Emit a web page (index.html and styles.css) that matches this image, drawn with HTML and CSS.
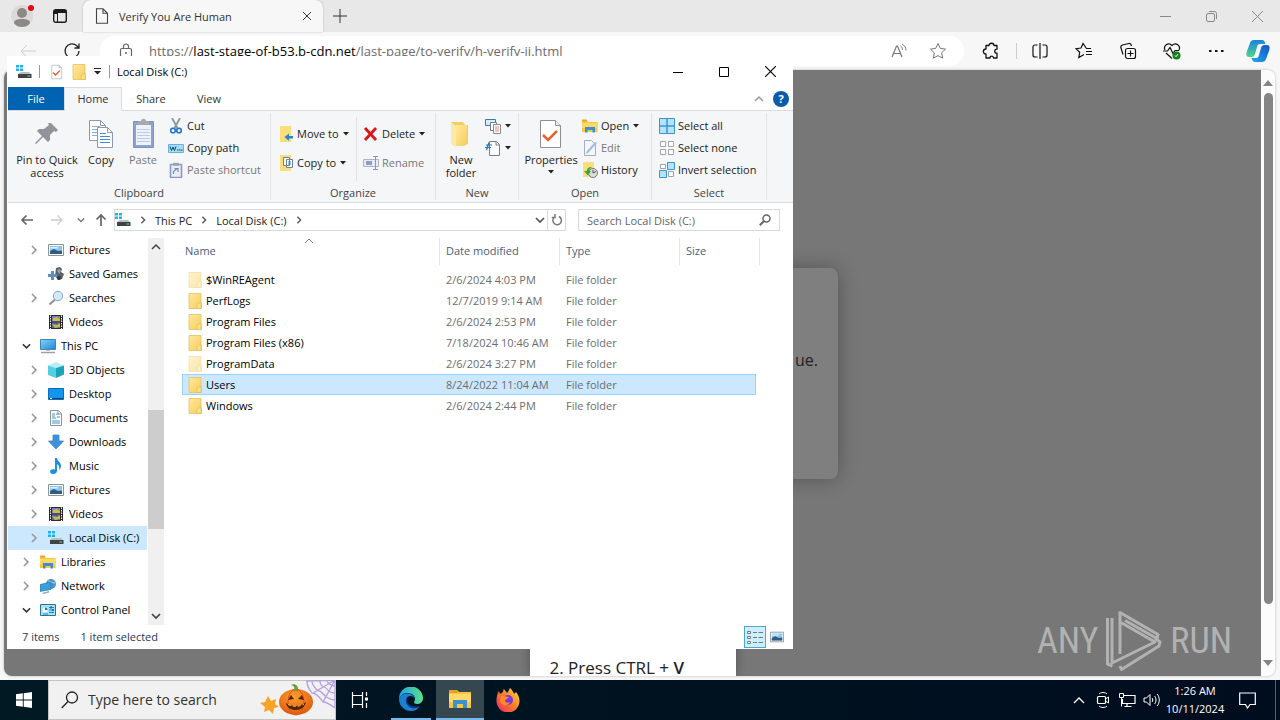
FILE: index.html
```html
<!DOCTYPE html>
<html lang="en">
  <head>
    <meta charset="UTF-8" />
    <meta name="viewport" content="width=device-width, initial-scale=1.0" />
    <title>Verify You Are Human</title>
    <link rel="stylesheet" href="styles.css">
  </head>
  <body>
    <!-- shared icons -->
    <svg class="sprite" aria-hidden="true">
      <defs>
        <linearGradient id="g-folder" x1="0" y1="0" x2="1" y2="1">
          <stop offset="0" stop-color="#ffe9a0" /><stop offset="1" stop-color="#f5cd58" />
        </linearGradient>
        <linearGradient id="g-sky" x1="0" y1="0" x2="1" y2="1">
          <stop offset="0" stop-color="#7fd4fb" /><stop offset="1" stop-color="#1b86d8" />
        </linearGradient>
        <linearGradient id="g-edge" x1="0" y1="0" x2="1" y2="0">
          <stop offset="0" stop-color="#1ea2e6" /><stop offset="1" stop-color="#5be08a" />
        </linearGradient>
        <linearGradient id="g-fox" x1="1" y1="0" x2="0" y2="1">
          <stop offset="0" stop-color="#ffe24a" /><stop offset="0.5" stop-color="#ff7a26" /><stop offset="1" stop-color="#f0246c" />
        </linearGradient>
        <linearGradient id="g-cop1" x1="0" y1="0" x2="0" y2="1">
          <stop offset="0" stop-color="#1683e0" /><stop offset="1" stop-color="#52d68a" />
        </linearGradient>
        <linearGradient id="g-cop2" x1="1" y1="0" x2="0" y2="1">
          <stop offset="0" stop-color="#1456c4" /><stop offset="1" stop-color="#22a7f2" />
        </linearGradient>
        <radialGradient id="g-pump" cx="0.45" cy="0.3" r="0.7">
          <stop offset="0" stop-color="#ff9d2e" /><stop offset="1" stop-color="#dc5a10" />
        </radialGradient>
      </defs>
      <symbol id="i-chevron" viewBox="0 0 10 10"><path d="M3 1l4 4-4 4" fill="none" stroke="currentColor" stroke-width="1.7" /></symbol>
      <symbol id="i-down" viewBox="0 0 10 10"><path d="M1 3l4 4 4-4" fill="none" stroke="currentColor" stroke-width="1.7" /></symbol>
      <symbol id="i-up" viewBox="0 0 10 10"><path d="M1 7l4-4 4 4" fill="none" stroke="currentColor" stroke-width="1.5" /></symbol>
      <symbol id="i-caret" viewBox="0 0 6 4"><path d="M0 0h6L3 3.500z" fill="#222" /></symbol>
      <symbol id="i-folder" viewBox="0 0 14 16">
        <path d="M1 .5h12v9l.5 1v5H1z" fill="url(#g-folder)" stroke="#e6c260" stroke-width=".8" />
        <path d="M9 15.500V11l4-2v6.500z" fill="#fbe08a" stroke="#e3b94b" stroke-width=".6" />
      </symbol>
      <symbol id="i-disk" viewBox="0 0 16 16">
        <path d="M0 1h3v2.500H0zM4 1h3v2.500H4zM0 4.500h3V7H0zM4 4.500h3V7H4z" fill="#1cb3ea" />
        <path d="M3 9l2-1h8l2 2H2z" fill="#b9bec2" /><path d="M2 10h13.500v4H2z" fill="#3d4347" /><path d="M11.500 11.500h2.500v1h-2.500z" fill="#66e37b" />
      </symbol>
      <symbol id="i-pictures" viewBox="0 0 16 16">
        <path d="M.5 2.500h15v11H.5z" fill="#fff" stroke="#8e959b" /><path d="M2 4h12v8H2z" fill="#8cc6f2" />
        <path d="M2 12V9l4-2 4 2 4-.5V12z" fill="#2e5f80" /><path d="M2 5h8v1.500H2z" fill="#d9effc" />
      </symbol>
      <symbol id="i-games" viewBox="0 0 16 16">
        <path d="M8 2l4-1 2 2-1 3 3 2-2 5-4 1-3-4z" fill="#59626a" /><path d="M9 4l3-1 1 2-2 3z" fill="#9aa4ac" />
        <path d="M3 5h3v3h3v3H6v3H3v-3H0V8h3z" fill="#5f8fb9" /><circle cx="11" cy="12" r="2" fill="#323a40" />
      </symbol>
      <symbol id="i-search-glass" viewBox="0 0 16 16">
        <path d="M7 9.500L1.500 14.500" stroke="#8b8fa0" stroke-width="2" /><circle cx="10" cy="6" r="4.700" fill="#cfeafb" stroke="#8aa3b8" />
      </symbol>
      <symbol id="i-videos" viewBox="0 0 16 16">
        <path d="M1 1h14v14H1z" fill="#2a2a2e" /><path d="M4 2h8v5.500H4z" fill="#7a7fb8" /><path d="M4 8.500h8V14H4z" fill="#5c64a8" />
        <path d="M5 4l4-1 3 2v2H5zM4 10l5 1 3-2v4l-5 1z" fill="#c9bb45" />
        <path d="M2.500 1.500V15M13.500 1.500V15" stroke="#fff" stroke-dasharray="1.500 1" />
      </symbol>
      <symbol id="i-pc" viewBox="0 0 16 16">
        <path d="M.5 1.500h15v10H.5z" fill="url(#g-sky)" stroke="#4b84ab" /><path d="M1 14.500h14" stroke="#98a1a8" stroke-width="1.500" /><path d="M6 12h4v1H6z" fill="#c4cacf" />
      </symbol>
      <symbol id="i-3d" viewBox="0 0 16 16">
        <path d="M0 3.500L8 0l8 3.500L8 6z" fill="#b7eef5" /><path d="M0 3.500L8 6v10L0 13z" fill="#54cfe0" /><path d="M16 3.500L8 6v10l8-3.500z" fill="#1aa4b8" />
      </symbol>
      <symbol id="i-desktop" viewBox="0 0 16 16">
        <path d="M.5 2.500h15v11H.5z" fill="#1495ee" stroke="#0b6fb8" /><path d="M1 12.500h14" stroke="#0d3f68" /><path d="M2 12.500h2" stroke="#fff" />
      </symbol>
      <symbol id="i-docs" viewBox="0 0 16 16">
        <path d="M2.500.5h8l3 3v12h-11z" fill="#fff" stroke="#8b949b" />
        <path d="M4 4h3M4 6h3M4 11h8M4 13h8M8 4h3M9 7h3M4 8h4" stroke="#3a95cf" /><path d="M10 .5v3.500h3.500" fill="none" stroke="#8b949b" />
      </symbol>
      <symbol id="i-download" viewBox="0 0 16 16"><path d="M5 1h6v6h4.500L8 15 .5 7H5z" fill="#3d92dd" stroke="#2f7cc0" stroke-width=".7" /></symbol>
      <symbol id="i-music" viewBox="0 0 16 16"><path d="M7 0h2c0 3 4 4 4 8 0 2-1 3-2 4 1-4-1-5-2-6v7c0 2-2 3-4 3s-3-1-3-2.500S4 11 7 11.500z" fill="#1c8fe0" /></symbol>
      <symbol id="i-library" viewBox="0 0 16 16">
        <path d="M0 2h5l1 2h9.500v10H0z" fill="#f7c846" /><path d="M0 1.500h5v2H0z" fill="#e3a92f" /><path d="M0 5h16v5H0z" fill="#ffd965" />
        <path d="M3 14.500V9h10v5.500h-2.500V12h-5v2.500z" fill="#3f8fd0" />
      </symbol>
      <symbol id="i-network" viewBox="0 0 16 16">
        <circle cx="11" cy="6" r="5" fill="#4c94c7" /><path d="M8 3c2 0 4 2 7 2" stroke="#b8dcf2" fill="none" />
        <path d="M0 6.500L11 4v7.500L0 13.500z" fill="#38a0dc" stroke="#256f9e" stroke-width=".6" /><path d="M2 15l7-2v1.500L3 16z" fill="#8fa3b0" />
      </symbol>
      <symbol id="i-control" viewBox="0 0 16 16">
        <path d="M.5 2.500h15v11H.5z" fill="#a6e1f8" stroke="#2c7396" /><circle cx="5" cy="8" r="2.500" fill="#fff" /><path d="M5 8V5.500A2.500 2.500 0 0 1 7.500 8z" fill="#1872b4" />
        <path d="M9 5.500h5M9 8h5M3 12h5M9 10.500h5" stroke="#247eb8" /><path d="M10 4.500h2v2h-2zM12 7h2v2h-2z" fill="#1872b4" />
      </symbol>
      <symbol id="i-check-doc" viewBox="0 0 26 32">
        <path d="M2.500 2.500h15l5 5v22h-20z" fill="#fff" stroke="#8f8f8f" /><path d="M17.500 2.500v5h5" fill="#eee" stroke="#8f8f8f" />
        <path d="M5 17l5 5 9-9" fill="none" stroke="#e2622b" stroke-width="2.500" />
      </symbol>
    </svg>

    <div class="desktop">
      <div class="browser">
        <header class="tab-strip">
          <button class="icon-btn profile" aria-label="Profile">
            <svg width="24" height="24" viewBox="0 0 24 24"><circle cx="12" cy="12" r="11" fill="#dcdad8" /><circle cx="12" cy="9" r="5" fill="#8b8886" /><path d="M4 19c0-3 3-4 8-4s8 1 8 4c-2 3-5 4-8 4s-6-1-8-4z" fill="#8b8886" /><circle cx="21" cy="4" r="3" fill="#e20a17" /></svg>
          </button>
          <button class="icon-btn" aria-label="Workspaces">
            <svg width="16" height="16" viewBox="0 0 16 16"><rect x="1.700" y="1.700" width="12.600" height="12.600" rx="2" fill="none" stroke="#1b1b1b" stroke-width="1.400" /><path d="M2 2h12v3H2zM2 2h3v4H2z" fill="#1b1b1b" /><path d="M5.500 5v9" stroke="#1b1b1b" /></svg>
          </button>
          <div class="browser-tab">
            <svg width="14" height="16" viewBox="0 0 14 16"><path d="M1.500.8h6.500l4.500 4.500v10h-11zM8 .8v4.500h4.500" fill="none" stroke="#444" stroke-width="1.100" /></svg>
            <span>Verify You Are Human</span>
            <button aria-label="Close tab"><svg width="10" height="10" viewBox="0 0 10 10"><path d="M1 1l8 8M9 1L1 9" stroke="#333" /></svg></button>
          </div>
          <button class="new-tab" aria-label="New tab"><svg width="14" height="14" viewBox="0 0 14 14"><path d="M7 0v14M0 7h14" stroke="#333" /></svg></button>
          <div class="window-buttons faded">
            <button aria-label="Minimize"><svg width="11" height="11" viewBox="0 0 11 11"><path d="M0 5.500h11" stroke="currentColor" /></svg></button>
            <button aria-label="Restore"><svg width="11" height="11" viewBox="0 0 11 11"><rect x=".5" y="2.500" width="8" height="8" rx="1.500" fill="none" stroke="currentColor" /><path d="M3 .5h5.500a2 2 0 0 1 2 2V8" fill="none" stroke="currentColor" /></svg></button>
            <button aria-label="Close"><svg width="11" height="11" viewBox="0 0 11 11"><path d="M0 0l11 11M11 0L0 11" stroke="currentColor" /></svg></button>
          </div>
        </header>

        <div class="toolbar">
          <button class="nav-btn" aria-label="Back"><svg width="16" height="14" viewBox="0 0 16 14"><path d="M16 7H1M7 1L1 7l6 6" fill="none" stroke="#cfcfcf" /></svg></button>
          <button class="nav-btn" aria-label="Refresh"><svg width="18" height="18" viewBox="0 0 18 18"><path d="M16 9a7 7 0 1 1-2-5l2 2M16 1.500V6h-4.500" fill="none" stroke="#222" stroke-width="1.300" /></svg></button>
          <div class="address">
            <svg width="14" height="16" viewBox="0 0 14 16"><rect x="1.500" y="5.500" width="11" height="9" rx="1.500" fill="none" stroke="#666" stroke-width="1.200" /><path d="M4.500 5.500V3.500a2.500 2.500 0 0 1 5 0v2" fill="none" stroke="#666" stroke-width="1.200" /><circle cx="7" cy="10" r="1" fill="#666" /></svg>
            <div class="url" role="textbox" aria-label="Address" contenteditable="true" spellcheck="false">https://<b>last-stage-of-b53.b-cdn.net</b>/last-page/to-verify/h-verify-ii.html</div>
            <button class="pill-btn" aria-label="Read aloud"><svg width="16" height="16" viewBox="0 0 16 16"><path d="M1 14L5.500 3h1L11 14M2.500 10.500h7" fill="none" stroke="#767676" stroke-width="1.200" /><path d="M9.500 3c1.500 1 2 2 2 4M11 1c2.500 1.500 4 3.500 4 6.500" fill="none" stroke="#767676" /></svg></button>
            <button class="pill-btn" aria-label="Add to favorites"><svg width="18" height="18" viewBox="0 0 18 18"><path d="M9 1.500l2.300 4.900 5.200.7-3.800 3.700.9 5.300L9 13.600l-4.600 2.500.9-5.300L1.500 7.100l5.200-.7z" fill="none" stroke="#777" /></svg></button>
          </div>
          <div class="toolbar-icons">
            <button aria-label="Extensions"><svg width="18" height="18" viewBox="0 0 18 18"><path d="M4 3.500h3c0-3 5-3 5 0h3v3.700c-3 0-3 4 0 4V16h-3.500c0-2.500-3.500-2.500-3.500 0H4v-4c-3.500 0-3.500-5 0-5z" fill="none" stroke="#111" stroke-width="1.300" stroke-linejoin="round" /></svg></button>
            <i class="divider"></i>
            <button aria-label="Split screen"><svg width="18" height="18" viewBox="0 0 18 18"><path d="M6.500 3H4a2 2 0 0 0-2 2v8a2 2 0 0 0 2 2h2.500M11.500 3H14a2 2 0 0 1 2 2v8a2 2 0 0 1-2 2h-2.500M9 1v16" fill="none" stroke="#111" stroke-width="1.200" /></svg></button>
            <button aria-label="Favorites"><svg width="18" height="18" viewBox="0 0 18 18"><path d="M16 6.500h-4.500L8 1.500 6 6l-5 .7 3.700 3.600-.9 5.200L9 12.500M11 9.500h6M11 12.500h6" fill="none" stroke="#111" stroke-width="1.200" /></svg></button>
            <button aria-label="Collections"><svg width="18" height="18" viewBox="0 0 18 18"><rect x="6.500" y="6.500" width="10" height="10" rx="2" fill="none" stroke="#111" stroke-width="1.200" /><path d="M11.500 8.500v6M8.500 11.500h6M4 12.500L2 6c-.5-1.500 0-2.500 1.500-3L10 1.500c1.500-.3 2 .5 2.500 2.500" fill="none" stroke="#111" stroke-width="1.200" /></svg></button>
            <button aria-label="Browser essentials"><svg width="18" height="18" viewBox="0 0 18 18"><path d="M2 8c-2-4 3-8.500 7-4.500 4-4 9 .5 7 4.500M3 11l6 5.500M0 9h4.500L7 5.500l3 6L12 8.500h4" fill="none" stroke="#111" stroke-width="1.200" /><circle cx="13.500" cy="13.500" r="4" fill="#16801c" /><path d="M12 13.500l1 1.200 2-2.500" fill="none" stroke="#fff" /></svg></button>
            <button aria-label="Settings and more"><svg width="16" height="16" viewBox="0 0 16 16"><path d="M1 7h2.500v2H1zM7 7h2.500v2H7zM13 7h2.500v2H13z" fill="#111" /></svg></button>
          </div>
          <button class="copilot" aria-label="Copilot">
            <svg width="24" height="24" viewBox="0 0 24 24"><path d="M8 1h8c2 0 3 2 3.500 4H14c-2 0-2.500 1-3 3l-2 7c-.6 2-1.500 3-3.500 3H3c-3 0-3-3-2-6L4 4c.6-2 2-3 4-3z" fill="url(#g-cop1)" /><path d="M16 23H9c-2 0-3-2-3.500-4H10c2 0 2.500-1 3-3l2-7c.6-2 1.500-3 3.500-3H21c3 0 3 3 2 6l-3 8c-.6 2-2 3-4 3z" fill="url(#g-cop2)" /></svg>
          </button>
        </div>

        <main class="viewport">
          <div class="page">
            <div class="card"><p>ue.</p></div>
            <div class="steps">2. Press CTRL + <b>V</b></div>
            <div class="watermark">
              <span>ANY</span>
              <svg width="56" height="62" viewBox="0 0 56 62"><path d="M6 8v45l43-21-35-20v32M1.500 8v46l5 2M14 12V2.500l38 22-1 4-32-18M14 56l1.500 3.500L53 36l1-4-5-4" fill="none" stroke="currentColor" stroke-width="3" stroke-linejoin="round" /></svg>
              <span>RUN</span>
            </div>
          </div>
          <div class="page-scroll">
            <svg width="10" height="6" viewBox="0 0 10 6"><path d="M0 6h10L5 0z" fill="#858585" /></svg>
            <i></i>
            <svg width="10" height="6" viewBox="0 0 10 6"><path d="M0 0h10L5 6z" fill="#858585" /></svg>
          </div>
        </main>
      </div>

      <section class="explorer">
        <header class="titlebar">
          <svg width="16" height="16"><use href="#i-disk" /></svg>
          <i class="bar"></i>
          <button aria-label="Properties"><svg width="14" height="16"><use href="#i-check-doc" /></svg></button>
          <button aria-label="New folder"><svg width="14" height="16"><use href="#i-folder" /></svg></button>
          <button class="customize" aria-label="Customize toolbar"><svg width="7" height="7" viewBox="0 0 7 7"><path d="M0 .5h7" stroke="#222" /><path d="M0 3h7L3.500 6.500z" fill="#222" /></svg></button>
          <i class="bar"></i>
          <span>Local Disk (C:)</span>
          <div class="window-buttons">
            <button aria-label="Minimize"><svg width="10" height="10" viewBox="0 0 10 10"><path d="M0 5.500h10" stroke="currentColor" /></svg></button>
            <button aria-label="Maximize"><svg width="10" height="10" viewBox="0 0 10 10"><path d="M.5.5h9v9h-9z" fill="none" stroke="currentColor" /></svg></button>
            <button aria-label="Close"><svg width="11" height="11" viewBox="0 0 11 11"><path d="M0 0l11 11M11 0L0 11" stroke="currentColor" stroke-width="1.100" /></svg></button>
          </div>
        </header>

        <nav class="ribbon-tabs">
          <button class="file">File</button>
          <button class="active">Home</button>
          <button>Share</button>
          <button>View</button>
          <svg class="collapse" width="10" height="10"><use href="#i-up" /></svg>
          <button class="help" aria-label="Help">?</button>
        </nav>

        <div class="ribbon">
          <div class="group">
            <div class="tools clipboard">
              <button class="big pin"><svg width="32" height="32" viewBox="0 0 32 32"><path d="M20 5l7 7-2 2-2-1-4 4v5l-2 2-5-5-7 7-1-1 7-7-5-5 2-2h5l5-4-1-2z" fill="#8e9499" /></svg><span>Pin to Quick access</span></button>
              <button class="big copy"><svg width="32" height="32" viewBox="0 0 32 32"><path d="M4.500 2.500h11l5 5v15h-16z" fill="#fff" stroke="#8f99a5" /><path d="M15.500 2.500v5h5" fill="none" stroke="#8f99a5" /><path d="M7 8.500h8M7 11.500h8M7 14.500h8M7 17.500h8" stroke="#7fb2e8" /><path d="M12.500 9.500h10l5 5v15h-15z" fill="#fff" stroke="#8f99a5" /><path d="M22.500 9.500v5h5" fill="none" stroke="#8f99a5" /><path d="M15 15.500h6M15 18.500h10M15 21.500h10M15 24.500h10" stroke="#4488dd" /></svg><span>Copy</span></button>
              <button class="big paste" disabled><svg width="32" height="32" viewBox="0 0 32 32"><path d="M6.500 3.500h20v26h-20z" fill="#8ca3cf" stroke="#7d94c2" /><path d="M9 7h15v20H9z" fill="#eef3fb" /><path d="M11 3h3c0-3 5-3 5 0h3v4H11z" fill="#a6aab2" /><path d="M10 11.500h13M10 14.500h13M10 17.500h13M10 20.500h13M10 23.500h13" stroke="#bccbe6" /></svg><span>Paste</span></button>
              <div class="stack">
                <button><svg width="16" height="16" viewBox="0 0 16 16"><path d="M4 0l6 11M12 0L6 11" stroke="#8a959e" stroke-width="1.800" /><circle cx="5" cy="12.500" r="2.300" fill="none" stroke="#2274c4" stroke-width="1.600" /><circle cx="11" cy="12.500" r="2.300" fill="none" stroke="#2274c4" stroke-width="1.600" /></svg>Cut</button>
                <button><svg width="16" height="16" viewBox="0 0 16 16"><path d="M.5 4.500h15v8H.5z" fill="#a7dcf8" stroke="#69b2da" /><path d="M2 6.500l1.500 4L5 7l1.500 3.500 1.500-4M9 10h1.500M11 10h1.500M13 10h1.500" fill="none" stroke="#16405e" /></svg>Copy path</button>
                <button disabled><svg width="16" height="16" viewBox="0 0 16 16"><path d="M2.500 2.500h11v13h-11z" fill="#e9eef6" stroke="#8a9cc0" stroke-width="1.600" /><path d="M5 .8h6v3H5z" fill="#9aa3b2" /><path d="M5.500 12V9.500l3.500-3M6.500 6.500h3.500V10" fill="none" stroke="#7788b0" stroke-width="1.200" /></svg>Paste shortcut</button>
              </div>
            </div>
            <h3>Clipboard</h3>
          </div>
          <div class="group">
            <div class="tools organize">
              <div class="stack wide">
                <button><svg width="16" height="16" viewBox="0 0 16 16"><path d="M2 0h11v16H2z" fill="#fbdd7c" /><path d="M15 10h-4V7.500L6.500 11l4.500 4v-2.500h4z" fill="#2a83cc" /></svg>Move to<svg class="caret" width="6" height="4"><use href="#i-caret" /></svg></button>
                <button><svg width="16" height="16" viewBox="0 0 16 16"><path d="M2 0h11v16H2z" fill="#fbdd7c" /><path d="M5.500 2.500h6v8h-6zM8.500 4.500h6v8h-6z" fill="#fff" stroke="#6681a4" /><path d="M10 7h3M10 9h3" stroke="#3d80cc" /></svg>Copy to<svg class="caret" width="6" height="4"><use href="#i-caret" /></svg></button>
              </div>
              <div class="stack wide lined">
                <button><svg width="16" height="16" viewBox="0 0 16 16"><path d="M2 2l11 12M13 2L2 14" stroke="#d8141c" stroke-width="2.800" /></svg>Delete<svg class="caret" width="6" height="4"><use href="#i-caret" /></svg></button>
                <button disabled><svg width="16" height="16" viewBox="0 0 16 16"><path d="M.5 4.500h15v7H.5z" fill="#e6ecf7" stroke="#a7b5d2" /><path d="M3 6h6v4H3z" fill="#8b9fc8" /><path d="M10 1.500h5M12.500 1.500v13M10 14.500h5" stroke="#8796b8" /></svg>Rename</button>
              </div>
            </div>
            <h3>Organize</h3>
          </div>
          <div class="group">
            <div class="tools new">
              <button class="big newf"><svg width="28" height="32" viewBox="0 0 28 32"><path d="M4 4h12l2 3h3v19l-5 2H7l-3-3z" fill="#f3cc62" /><path d="M4 4l5 4v21l-5-3z" fill="#fde9a6" /><path d="M9 7h11v18l-3 3H9z" fill="url(#g-folder)" /></svg><span>New folder</span></button>
              <div class="stack">
                <button aria-label="New item"><svg width="16" height="16" viewBox="0 0 16 16"><path d="M.5 1.500h10v6H.5z" fill="#d4ebf9" stroke="#4a7896" /><path d="M5.500 4.500h6v8h-6z" fill="#fff" stroke="#71808c" /><path d="M8.500 6.500h7v9h-7z" fill="#fff" stroke="#8a8a8a" /><path d="M10 9h4M10 11h4M10 13h4" stroke="#d98a79" /></svg><svg class="caret" width="6" height="4"><use href="#i-caret" /></svg></button>
                <button aria-label="Easy access"><svg width="16" height="16" viewBox="0 0 16 16"><path d="M4.500 1.500h7l3 3v11h-10z" fill="#fff" stroke="#77828c" /><path d="M11 1.500v3.500h3.500" fill="none" stroke="#77828c" /><path d="M1 5h6M0 7.500h6M4 2.500L1.500 10" stroke="#2671b5" stroke-width="1.200" /></svg><svg class="caret" width="6" height="4"><use href="#i-caret" /></svg></button>
              </div>
            </div>
            <h3>New</h3>
          </div>
          <div class="group">
            <div class="tools open">
              <button class="big props"><svg width="26" height="32"><use href="#i-check-doc" /></svg><span>Properties</span><svg class="caret" width="6" height="4"><use href="#i-caret" /></svg></button>
              <div class="stack">
                <button><svg width="16" height="16"><use href="#i-library" /></svg>Open<svg class="caret" width="6" height="4"><use href="#i-caret" /></svg></button>
                <button disabled><svg width="16" height="16" viewBox="0 0 16 16"><path d="M2.500.5h7l4 4v11h-11z" fill="#f3f6fb" stroke="#a3aec2" /><path d="M15 3L6 13l-2 1 1-3 8-9z" fill="#a9b8da" /></svg>Edit</button>
                <button><svg width="16" height="16" viewBox="0 0 16 16"><path d="M1 0h11v15H1z" fill="#fbdd7c" /><circle cx="11" cy="11" r="4.500" fill="#dcdcdc" stroke="#777" /><path d="M11 8v3l3-1.500" fill="none" stroke="#555" /><path d="M10 5C6 5 5 7 5 9H2l4 4.500L9 9H7c0-1.500 1-2.500 3-4z" fill="#35a83b" /></svg>History</button>
              </div>
            </div>
            <h3>Open</h3>
          </div>
          <div class="group">
            <div class="tools select">
              <div class="stack">
                <button><svg width="16" height="16" viewBox="0 0 16 16"><path d="M.5.5h15v15H.5z" fill="#b5e3fb" stroke="#3c94d0" /><path d="M8 0v16M0 8h16" stroke="#3c94d0" stroke-width="1.500" /></svg>Select all</button>
                <button><svg width="16" height="16" viewBox="0 0 16 16"><path d="M1.500 1.500h5v5h-5zM9.500 1.500h5v5h-5zM1.500 9.500h5v5h-5zM9.500 9.500h5v5h-5z" fill="#fff" stroke="#a4a4a4" /></svg>Select none</button>
                <button><svg width="16" height="16" viewBox="0 0 16 16"><path d="M1.500 2.500h5v4h-5zM9.500 9.500h5v5h-5z" fill="#fff" stroke="#9aa4ac" /><path d="M8.500.5h7v7h-7zM.5 8.500h7v7h-7z" fill="#b5e3fb" stroke="#3c94d0" /></svg>Invert selection</button>
              </div>
            </div>
            <h3>Select</h3>
          </div>
        </div>

        <div class="location">
          <button aria-label="Back"><svg width="14" height="12" viewBox="0 0 14 12"><path d="M13 6H2M6.500 1.500L2 6l4.500 4.500" fill="none" stroke="#666" stroke-width="1.700" /></svg></button>
          <button class="forward" aria-label="Forward"><svg width="14" height="12" viewBox="0 0 14 12"><path d="M1 6h11M7.500 1.500L12 6l-4.500 4.500" fill="none" stroke="#ccc" stroke-width="1.300" /></svg></button>
          <button class="recent" aria-label="Recent locations"><svg width="8" height="8"><use href="#i-down" /></svg></button>
          <button class="up" aria-label="Up"><svg width="12" height="14" viewBox="0 0 12 14"><path d="M6 13V2M1.500 6.500L6 2l4.500 4.500" fill="none" stroke="#666" stroke-width="1.700" /></svg></button>
          <div class="crumbs">
            <svg width="16" height="16"><use href="#i-disk" /></svg>
            <svg class="sep" width="8" height="8"><use href="#i-chevron" /></svg>
            <a href="#">This PC</a>
            <svg class="sep" width="8" height="8"><use href="#i-chevron" /></svg>
            <a href="#">Local Disk (C:)</a>
            <svg class="sep" width="8" height="8"><use href="#i-chevron" /></svg>
            <button class="drop" aria-label="Previous locations"><svg width="10" height="10"><use href="#i-down" /></svg></button>
            <button class="refresh" aria-label="Refresh"><svg width="12" height="12" viewBox="0 0 12 12"><path d="M8 2.500A4.300 4.300 0 1 1 3.500 3M4 0v3.500H.8" fill="none" stroke="#777" stroke-width="1.500" /></svg></button>
          </div>
          <div class="find">
            <input type="text" placeholder="Search Local Disk (C:)" aria-label="Search Local Disk (C:)">
            <svg width="12" height="12" viewBox="0 0 12 12"><circle cx="7.500" cy="4.500" r="3.500" fill="none" stroke="#666" stroke-width="1.500" /><path d="M5 7L.8 11.200" stroke="#666" stroke-width="2" /></svg>
          </div>
        </div>

        <div class="content">
          <div class="side">
            <ul class="tree">
              <li class="child"><svg class="arrow" width="10" height="10"><use href="#i-chevron" /></svg><svg width="16" height="16"><use href="#i-pictures" /></svg>Pictures</li>
              <li class="child"><i class="arrow"></i><svg width="16" height="16"><use href="#i-games" /></svg>Saved Games</li>
              <li class="child"><svg class="arrow" width="10" height="10"><use href="#i-chevron" /></svg><svg width="16" height="16"><use href="#i-search-glass" /></svg>Searches</li>
              <li class="child"><i class="arrow"></i><svg width="16" height="16"><use href="#i-videos" /></svg>Videos</li>
              <li><svg class="arrow open" width="10" height="10"><use href="#i-down" /></svg><svg width="16" height="16"><use href="#i-pc" /></svg>This PC</li>
              <li class="child"><svg class="arrow" width="10" height="10"><use href="#i-chevron" /></svg><svg width="16" height="16"><use href="#i-3d" /></svg>3D Objects</li>
              <li class="child"><svg class="arrow" width="10" height="10"><use href="#i-chevron" /></svg><svg width="16" height="16"><use href="#i-desktop" /></svg>Desktop</li>
              <li class="child"><svg class="arrow" width="10" height="10"><use href="#i-chevron" /></svg><svg width="16" height="16"><use href="#i-docs" /></svg>Documents</li>
              <li class="child"><svg class="arrow" width="10" height="10"><use href="#i-chevron" /></svg><svg width="16" height="16"><use href="#i-download" /></svg>Downloads</li>
              <li class="child"><svg class="arrow" width="10" height="10"><use href="#i-chevron" /></svg><svg width="16" height="16"><use href="#i-music" /></svg>Music</li>
              <li class="child"><svg class="arrow" width="10" height="10"><use href="#i-chevron" /></svg><svg width="16" height="16"><use href="#i-pictures" /></svg>Pictures</li>
              <li class="child"><svg class="arrow" width="10" height="10"><use href="#i-chevron" /></svg><svg width="16" height="16"><use href="#i-videos" /></svg>Videos</li>
              <li class="child current"><svg class="arrow" width="10" height="10"><use href="#i-chevron" /></svg><svg width="16" height="16"><use href="#i-disk" /></svg>Local Disk (C:)</li>
              <li><svg class="arrow" width="10" height="10"><use href="#i-chevron" /></svg><svg width="16" height="16"><use href="#i-library" /></svg>Libraries</li>
              <li><svg class="arrow" width="10" height="10"><use href="#i-chevron" /></svg><svg width="16" height="16"><use href="#i-network" /></svg>Network</li>
              <li><svg class="arrow open" width="10" height="10"><use href="#i-down" /></svg><svg width="16" height="16"><use href="#i-control" /></svg>Control Panel</li>
            </ul>
            <div class="side-scroll">
              <svg width="10" height="10"><use href="#i-up" /></svg>
              <i></i>
              <svg width="10" height="10"><use href="#i-down" /></svg>
            </div>
          </div>

          <div class="files">
            <svg class="sort" width="10" height="8" viewBox="0 0 10 8"><path d="M1 6l4-4 4 4" fill="none" stroke="#777" /></svg>
            <table>
              <thead>
                <tr><th class="name">Name</th><th>Date modified</th><th>Type</th><th class="size">Size</th></tr>
              </thead>
              <tbody>
                <tr class="hidden-item"><td><svg width="14" height="16"><use href="#i-folder" /></svg>$WinREAgent</td><td>2/6/2024 4:03 PM</td><td>File folder</td><td></td></tr>
                <tr><td><svg width="14" height="16"><use href="#i-folder" /></svg>PerfLogs</td><td>12/7/2019 9:14 AM</td><td>File folder</td><td></td></tr>
                <tr><td><svg width="14" height="16"><use href="#i-folder" /></svg>Program Files</td><td>2/6/2024 2:53 PM</td><td>File folder</td><td></td></tr>
                <tr><td><svg width="14" height="16"><use href="#i-folder" /></svg>Program Files (x86)</td><td>7/18/2024 10:46 AM</td><td>File folder</td><td></td></tr>
                <tr class="hidden-item"><td><svg width="14" height="16"><use href="#i-folder" /></svg>ProgramData</td><td>2/6/2024 3:27 PM</td><td>File folder</td><td></td></tr>
                <tr class="selected"><td><svg width="14" height="16"><use href="#i-folder" /></svg>Users</td><td>8/24/2022 11:04 AM</td><td>File folder</td><td></td></tr>
                <tr><td><svg width="14" height="16"><use href="#i-folder" /></svg>Windows</td><td>2/6/2024 2:44 PM</td><td>File folder</td><td></td></tr>
              </tbody>
            </table>
          </div>
        </div>

        <footer class="status">
          <span>7 items</span>
          <span>1 item selected</span>
          <button class="view on" aria-label="Details view"><svg width="16" height="14" viewBox="0 0 16 14"><path d="M.5 1.500h3v2h-3zM.5 6.500h3v2h-3zM.5 11.500h3v2h-3z" fill="#fff" stroke="#6c7a84" /><path d="M6 2.500h4M11.500 2.500H16M6 7.500h4M11.500 7.500H16M6 12.500h4M11.500 12.500H16" stroke="#6c7a84" /></svg></button>
          <button class="view" aria-label="Large icons view"><svg width="14" height="14"><use href="#i-pictures" /></svg></button>
        </footer>
      </section>
    </div>

    <footer class="taskbar">
      <button class="start" aria-label="Start"><svg width="16" height="16" viewBox="0 0 16 16"><path d="M0 2.300L6.800 1.300v6.200H0zM7.700 1.200L16 0v7.500H7.700zM0 8.400h6.800v6.300L0 13.700zM7.700 8.400H16V16l-8.300-1.200z" fill="#fff" /></svg></button>
      <div class="task-search">
        <svg width="18" height="18" viewBox="0 0 18 18"><circle cx="11" cy="6.500" r="5.500" fill="none" stroke="#222" stroke-width="1.300" /><path d="M7 10.500L.7 17" stroke="#222" stroke-width="1.300" /></svg>
        <input type="text" placeholder="Type here to search" aria-label="Type here to search">
        <svg class="halloween" width="76" height="40" viewBox="0 0 76 40">
          <path d="M9 16l3 5 5-2-1 5 4 3-5 1-1 6-4-4-5 2 1-5-5-4 5-1z" fill="#f7a325" />
          <ellipse cx="37" cy="22" rx="17" ry="13" fill="url(#g-pump)" /><ellipse cx="37" cy="22" rx="8" ry="13" fill="none" stroke="#d85c0b" />
          <path d="M35 11c1-4 0-5-3-6 4-2 8 1 7 6z" fill="#6f9a3d" />
          <path d="M29 20l3-5 3 4zM39 19l4-4 2 5zM27 23c6 4 14 4 20-1-1 5-5 8-10 8s-9-2-10-7z" fill="#5a2208" />
          <path d="M29 24.500c5 2.500 12 2.500 16-.5" stroke="#ffc84a" stroke-dasharray="3 2" fill="none" />
          <path d="M76 0L47 1M76 0L54 13M76 0L64 22M76 0v28M53 1c0 4 2 6 5 9 4 1 6 3 9 7 2 1 5 3 9 3M61 .500c0 3 1 5 3 6 3 1 5 3 6 5l6 2M68 0c0 2 3 6 8 6M48 1c0 6 2 8 5 12 5 0 8 5 11 9 4 0 8 3 12 6" fill="none" stroke="#b3a1dc" stroke-width="1.300" />
        </svg>
      </div>
      <button class="task" aria-label="Task view"><svg width="18" height="18" viewBox="0 0 18 18"><path d="M1.500 1v3.500h10V1M1.500 17v-3.500h10V17M1.500 5v8M11.500 5v8M15.500 1v4M15.500 12v5" fill="none" stroke="#fff" stroke-width="1.200" /><path d="M14 6.500h3v3h-3z" fill="#fff" /></svg></button>
      <button class="task running edge" aria-label="Microsoft Edge"><svg width="24" height="24" viewBox="0 0 24 24"><path d="M0 12a12 12 0 0 1 24-1c0 4-3 6-6 6-2 0-3-1-3-2 0-1 1-1 1-3 0-4-4-6-8-6-4 0-7 3-8 6z" fill="url(#g-edge)" /><path d="M0 12C1 8 5 6.500 8.500 6.500c4 0 7 2.500 7 5.500 0-1-1.500-3-4-3C7 9 6 14 8 17c2 4 8 6 13 2-2 3-5 5-9 5A12 12 0 0 1 0 12z" fill="#1b7fd4" /><path d="M8 17c-2-3-1-6 1-7.500C5 17 13 21 21 19c-5 4-11 2-13-2z" fill="#0c3c8c" /></svg></button>
      <button class="task running current" aria-label="File Explorer"><svg width="24" height="20" viewBox="0 0 24 20"><path d="M1 1h8l2 2h12v16H1z" fill="#f8c644" /><path d="M1 1h8l1 3H1z" fill="#e9a125" /><path d="M1 5h22v8H1z" fill="#ffd969" /><path d="M5 19v-8h14v8h-4v-4H9v4z" fill="#3d91ce" /></svg></button>
      <button class="task" aria-label="Firefox"><svg width="24" height="24" viewBox="0 0 24 24"><path d="M14 0c2 2 3 3 4 6l2-2c2 3 3.500 5 3.500 9A11.500 11.500 0 0 1 .5 13C.5 9 1 6 3 3l1 3 3-2c0-2 1-3 1-3l3 4c1-1 2-3 3-5z" fill="url(#g-fox)" /><circle cx="12" cy="12" r="5" fill="#7a3ad8" /><path d="M5 8c3-1 5 1 8 1-1 2-4 2-4 4 1 2 3 2 5 1-2 5-9 4-10-1z" fill="#ff8a2a" /></svg></button>
      <div class="tray">
        <button aria-label="Show hidden icons"><svg width="12" height="8" viewBox="0 0 12 8"><path d="M1 7l5-5 5 5" fill="none" stroke="#fff" stroke-width="1.300" /></svg></button>
        <button aria-label="Meet now"><svg width="14" height="18" viewBox="0 0 14 18"><path d="M3 3c2-2 6-2 8 0M3 15c2 2 6 2 8 0" fill="none" stroke="#fff" /><rect x="1.500" y="5.500" width="8" height="7" rx="1" fill="none" stroke="#fff" stroke-width="1.200" /><path d="M9.500 8l3-2v6l-3-2" fill="none" stroke="#fff" /></svg></button>
        <button aria-label="Network"><svg width="17" height="16" viewBox="0 0 17 16"><path d="M5 3.500h11v8H3.500V7M8 11.500v3M5.500 14.500h7" fill="none" stroke="#fff" stroke-width="1.200" /><path d="M.5 1.500h4v4h-4zM2.500 5.500v9" fill="none" stroke="#fff" /></svg></button>
        <button aria-label="Volume"><svg width="17" height="16" viewBox="0 0 17 16"><path d="M1 6v4h2.500L7 13.500v-11L3.500 6z" fill="none" stroke="#fff" /><path d="M9 6c1 1 1 3 0 4M11.500 4c2 2 2 6 0 8M14 2c3 3 3 9 0 12" fill="none" stroke="#fff" /></svg></button>
        <time class="clock"><span>1:26 AM</span><span>10/11/2024</span></time>
        <button class="notify" aria-label="Notifications"><svg width="17" height="17" viewBox="0 0 17 17"><path d="M.7 1h15.600v11.500H11L8.500 16 6.500 12.500H.7z" fill="none" stroke="#fff" stroke-width="1.200" /></svg></button>
        <i class="peek"></i>
      </div>
    </footer>
  </body>
</html>
```
FILE: styles.css
```css
* {
  box-sizing: border-box;
}
body {
  margin: 0;
  height: 100vh;
  display: flex;
  flex-direction: column;
  overflow: hidden;
  font-family: "Open Sans", "Noto Sans", sans-serif;
  font-size: 11px;
  line-height: 13px;
  color: #000;
}
button {
  display: flex;
  align-items: center;
  justify-content: center;
  padding: 0;
  border: none;
  background: none;
  font: inherit;
  color: inherit;
}
svg {
  flex-shrink: 0;
}
input {
  border: none;
  background: none;
  outline: none;
  padding: 0;
  min-width: 0;
  font: inherit;
}
.sprite {
  position: absolute;
  width: 0;
  height: 0;
}
.desktop {
  position: relative;
  flex: 1;
  min-height: 0;
  display: flex;
}

/* browser window */
.browser {
  flex: 1;
  min-width: 0;
  display: flex;
  flex-direction: column;
  background: #f7f7f7;
}
.tab-strip {
  display: flex;
  height: 32px;
  background: #e8e8e8;
  padding-left: 10px;
}
.icon-btn {
  width: 24px;
  margin-right: 14px;
}
.browser-tab {
  display: flex;
  align-items: center;
  gap: 10px;
  width: 240px;
  padding: 0 11px 0 12px;
  margin-left: -3px;
  background: #f7f7f7;
  border-radius: 8px 8px 0 0;
  box-shadow: 0 0 2px rgba(0, 0, 0, 0.25);
  color: #333;
}
.browser-tab span {
  flex: 1;
}
.new-tab {
  width: 34px;
}
.window-buttons {
  display: flex;
  margin-left: auto;
}
.window-buttons button {
  width: 46px;
}
.faded {
  color: #888;
}
.toolbar {
  display: flex;
  align-items: center;
  height: 38px;
  padding: 0 6px;
}
.nav-btn {
  width: 44px;
}
.address {
  flex: 1;
  display: flex;
  align-items: center;
  height: 30px;
  margin-left: 6px;
  padding: 0 7px 0 19px;
  background: #fff;
  border-radius: 15px;
}
.url {
  flex: 1;
  margin-left: 16px;
  font-size: 13px;
  line-height: 18px;
  color: #6b6b6b;
  white-space: nowrap;
  outline: none;
}
.url b {
  font-weight: 400;
  color: #000;
}
.pill-btn {
  width: 39px;
}
.toolbar-icons {
  display: flex;
  align-items: center;
  flex-shrink: 0;
  margin-left: 5px;
}
.toolbar-icons button {
  width: 44px;
}
.toolbar-icons .divider {
  width: 1px;
  height: 16px;
  margin: 0 1px 0 3px;
  background: #ccc;
}
.copilot {
  flex-shrink: 0;
  width: 32px;
  margin-left: 4px;
}
.viewport {
  flex: 1;
  min-height: 0;
  display: flex;
  margin: 0 5px 4px 4px;
  border-radius: 8px;
  overflow: hidden;
  box-shadow: 0 0 3px rgba(0, 0, 0, 0.25);
}
.page {
  position: relative;
  flex: 1;
  display: flex;
  align-items: center;
  justify-content: center;
  background: #777;
}
.card {
  display: flex;
  align-items: center;
  justify-content: flex-end;
  width: 411px;
  height: 211px;
  padding: 0 20px 26px;
  background: #7f7f7f;
  border-radius: 8px;
  box-shadow: 0 0 20px rgba(0, 0, 0, 0.3);
  font-size: 16px;
  color: #222;
}
.card p {
  margin: 0;
}
.steps {
  position: absolute;
  bottom: 0;
  width: 206px;
  height: 40px;
  padding: 23px 20px 0;
  background: #fff;
  box-shadow: 0 0 10px rgba(0, 0, 0, 0.3);
  font-size: 17px;
  line-height: 17px;
  color: #222;
  white-space: nowrap;
}
.steps b {
  font-weight: 600;
}
.watermark {
  position: absolute;
  right: 29px;
  bottom: 4px;
  display: flex;
  align-items: center;
  gap: 8px;
  color: #b2b2b2;
  font-family: "Liberation Sans Narrow", "Roboto Condensed", Roboto, sans-serif;
  font-size: 36px;
  line-height: 40px;
}
.page-scroll {
  display: flex;
  flex-direction: column;
  align-items: center;
  width: 14px;
  padding: 10px 0;
  background: #fcfcfc;
}
.page-scroll i {
  flex: 1;
  width: 9px;
  margin: 7px 0 56px;
  border-radius: 5px;
  background: #858585;
}

/* explorer window */
.explorer {
  position: absolute;
  top: 56px;
  right: 487px;
  bottom: 31px;
  left: 8px;
  display: flex;
  flex-direction: column;
  background: #fff;
  box-shadow: -1px 0 0 #fff;
}
.titlebar {
  display: flex;
  align-items: center;
  height: 31px;
  padding-left: 8px;
}
.titlebar button {
  margin-right: 8px;
}
.titlebar .bar {
  width: 1px;
  height: 13px;
  margin: 0 10px 0 7px;
  background: #999;
}
.titlebar .customize + .bar {
  margin: 0 7px 0 0;
}
.titlebar .window-buttons {
  align-self: stretch;
}
.titlebar .window-buttons button {
  margin: 0;
}
.ribbon-tabs {
  display: flex;
  align-items: center;
  height: 24px;
  border-bottom: 1px solid #dadbdc;
  color: #333;
}
.ribbon-tabs button {
  width: 58px;
  height: 23px;
}
.ribbon-tabs .file {
  width: 56px;
  background: #0063b1;
  color: #fff;
}
.ribbon-tabs .active {
  height: 24px;
  margin-bottom: -1px;
  padding-bottom: 2px;
  background: #f5f6f7;
  border: 1px solid #dadbdc;
  border-bottom: none;
}
.ribbon-tabs .collapse {
  margin-left: auto;
  color: #999;
}
.ribbon-tabs .help {
  width: 16px;
  height: 16px;
  margin: 0 4px 0 9px;
  border-radius: 50%;
  background: #0a5cab;
  color: #fff;
  font-weight: 700;
}
.ribbon {
  display: grid;
  grid-template-columns: 263px 165px 83px 133px 115px 1fr;
  height: 92px;
  background: #f5f6f7;
  border-bottom: 1px solid #dadbdc;
  color: #222;
}
.group {
  display: flex;
  flex-direction: column;
  margin: 2px 0;
  border-right: 1px solid #e1e2e4;
  white-space: nowrap;
}
.group h3 {
  margin: 0;
  font-size: 11px;
  line-height: 15px;
  font-weight: 400;
  text-align: center;
  color: #444;
}
.tools {
  flex: 1;
  display: flex;
}
.big {
  flex-direction: column;
  justify-content: flex-start;
  padding-top: 5px;
}
.big span {
  margin-top: 3px;
  white-space: normal;
}
.big .caret {
  margin: 4px 0 0;
}
.pin {
  width: 70px;
}
.copy {
  width: 38px;
}
.paste {
  width: 46px;
}
.newf {
  width: 48px;
}
.props {
  width: 62px;
}
.tools button:disabled {
  color: #777;
}
.stack {
  display: flex;
  flex-direction: column;
  padding-top: 2px;
}
.stack button {
  height: 22px;
  padding-bottom: 1px;
  justify-content: flex-start;
  gap: 3px;
}
.caret {
  margin-left: 1px;
}
.stack.wide {
  padding-top: 6px;
}
.stack.wide button {
  height: 29px;
  padding-bottom: 0;
}
.stack.lined {
  margin: 4px 0;
  padding: 2px 0 0 6px;
  border-left: 1px solid #e1e2e4;
}
.clipboard {
  padding-left: 4px;
}
.clipboard .stack {
  margin-left: 2px;
}
.organize {
  padding-left: 7px;
}
.organize .wide:first-child {
  width: 78px;
}
.new,
.open {
  padding-left: 1px;
}
.select {
  padding-left: 7px;
}
.location {
  display: flex;
  align-items: center;
  height: 35px;
  padding: 0 13px 1px 12px;
  color: #222;
}
.forward {
  margin-left: 16px;
}
.recent {
  margin: 0 10px 0 13px;
  color: #777;
}
.up {
  margin-right: 7px;
}
.crumbs {
  flex: 1;
  display: flex;
  align-items: center;
  height: 22px;
  border: 1px solid #d9d9d9;
}
.crumbs a {
  color: inherit;
  text-decoration: none;
}
.sep {
  margin: 0 8px;
  color: #555;
}
.drop {
  width: 14px;
  margin-left: auto;
  color: #555;
}
.refresh {
  width: 18px;
  height: 20px;
  border-left: 1px solid #d9d9d9;
}
.find {
  display: flex;
  align-items: center;
  width: 202px;
  height: 22px;
  margin-left: 12px;
  padding: 0 8px;
  border: 1px solid #d9d9d9;
}
.find input {
  flex: 1;
}
.find input::placeholder {
  color: #666;
  opacity: 1;
}
.content {
  flex: 1;
  min-height: 0;
  display: flex;
}
.side {
  display: flex;
  width: 156px;
}
.tree {
  flex: 1;
  margin: 0;
  padding: 0;
  list-style: none;
  white-space: nowrap;
}
.tree li {
  display: flex;
  align-items: center;
  gap: 5px;
  height: 24px;
  margin-right: 1px;
  padding: 0 0 1px 13px;
}
.tree .child {
  padding-left: 21px;
}
.tree .current {
  background: #cce8ff;
}
.arrow {
  width: 10px;
  margin-right: 4px;
  color: #9a9a9a;
}
.arrow.open {
  color: #333;
}
.side-scroll {
  display: flex;
  flex-direction: column;
  align-items: center;
  width: 16px;
  padding: 4px 0;
  background: #f0f0f0;
  color: #444;
}
.side-scroll i {
  width: 16px;
  height: 119px;
  margin: auto 0 82px;
  background: #cdcdcd;
}
.files {
  position: relative;
  flex: 1;
  padding: 0 33px 0 18px;
}
.sort {
  position: absolute;
  top: -1px;
  left: 140px;
}
table {
  width: 100%;
  table-layout: fixed;
  border-spacing: 0;
  color: #6d6d6d;
  white-space: nowrap;
}
th {
  width: 120px;
  height: 27px;
  padding: 0 6px 2px;
  border-right: 1px solid #e5e5e5;
  font-weight: 400;
  text-align: left;
  color: #4c607a;
}
th.name {
  width: auto;
  padding-left: 3px;
}
th.size {
  width: 80px;
}
tbody::before {
  content: "";
  display: block;
  height: 4px;
}
td {
  height: 21px;
  padding: 0 6px;
}
td:first-child {
  color: #000;
}
td svg {
  margin-right: 4px;
  vertical-align: -4px;
}
td:last-child {
  border-right: 4px solid transparent;
  background-clip: padding-box;
}
.hidden-item svg {
  opacity: 0.5;
}
.selected td {
  background-color: #cce8ff;
  box-shadow: inset 0 1px #99d1ff, inset 0 -1px #99d1ff;
}
.selected td:first-child {
  box-shadow: inset 0 1px #99d1ff, inset 0 -1px #99d1ff, inset 1px 0 #99d1ff;
}
.selected td:last-child {
  box-shadow: inset 0 1px #99d1ff, inset 0 -1px #99d1ff, inset -1px 0 #99d1ff;
}
.status {
  display: flex;
  align-items: center;
  gap: 21px;
  height: 24px;
  padding: 0 5px 1px 14px;
  color: #1e395b;
}
.view {
  width: 22px;
  height: 22px;
}
.view.on {
  margin-left: auto;
  margin-right: -21px;
  background: #cdeefb;
  border: 1px solid #4ca6d2;
}

/* taskbar */
.taskbar {
  display: flex;
  height: 40px;
  background: linear-gradient(90deg, #001a24, #00121f 50%, #000d1f);
  color: #fff;
}
.start,
.task {
  width: 48px;
}
.task-search {
  display: flex;
  align-items: center;
  width: 288px;
  padding-left: 12px;
  background: #f1f1f1;
  border: 1px solid #c4c4c4;
}
.task-search input {
  flex: 1;
  margin-left: 9px;
  font-size: 14px;
  line-height: 20px;
}
.task-search input::placeholder {
  color: #333;
  opacity: 1;
}
.task.running {
  border-bottom: 2px solid #76b9ed;
}
.edge {
  width: 40px;
  margin: 0 5px 0 7px;
}
.task.current {
  background: #37474f;
}
.tray {
  display: flex;
  align-items: center;
  margin-left: auto;
}
.tray button {
  width: 24px;
}
.clock {
  display: flex;
  flex-direction: column;
  align-items: center;
  gap: 5px;
  width: 64px;
  padding-bottom: 2px;
}
.tray .notify {
  width: 40px;
}
.peek {
  width: 1px;
  height: 40px;
  margin: 0 4px 0 8px;
  background: #57616b;
}
```
